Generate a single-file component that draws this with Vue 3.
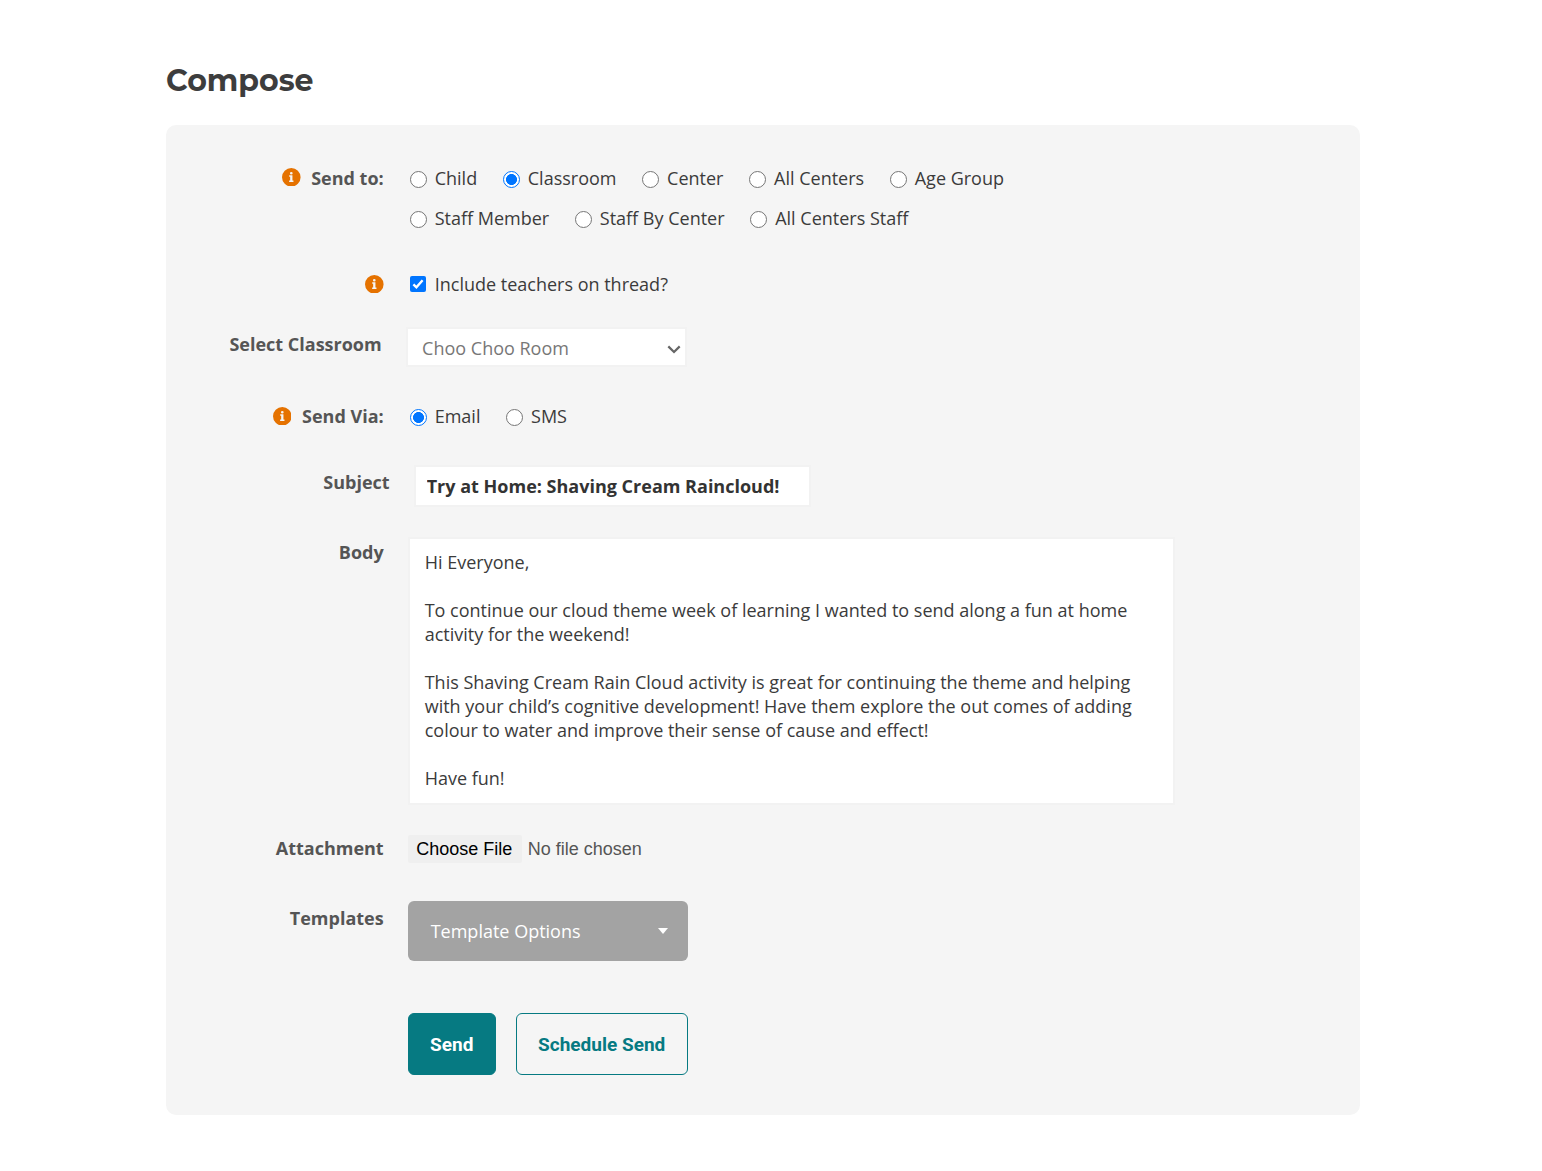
<script setup>
import { ref } from 'vue'

const recipientRows = [
  ['Child', 'Classroom', 'Center', 'All Centers', 'Age Group'],
  ['Staff Member', 'Staff By Center', 'All Centers Staff'],
]
const channels = ['Email', 'SMS']

const recipient = ref('Classroom')
const channel = ref('Email')
const includeTeachers = ref(true)
const subject = ref('Try at Home: Shaving Cream Raincloud!')
const body = [
  'Hi Everyone,',
  '',
  'To continue our cloud theme week of learning I wanted to send along a fun at home',
  'activity for the weekend!',
  '',
  'This Shaving Cream Rain Cloud activity is great for continuing the theme and helping',
  'with your child’s cognitive development! Have them explore the out comes of adding',
  'colour to water and improve their sense of cause and effect!',
  '',
  'Have fun!',
].join('\n')
const infoPath =
  'M9 0a9 9 0 1 0 0 18A9 9 0 0 0 9 0zM9 3.8a1.3 1.3 0 1 1 0 2.6A1.3 1.3 0 0 1 9 3.8zM7 7.1h3.1v5.1h1v1.3H6.9v-1.3h1V8.4H7z'
</script>

<template>
  <main class="page">
    <h1>Compose</h1>
    <form class="panel" @submit.prevent>
      <div class="row send-to">
        <div class="label">
          <svg class="info" viewBox="0 0 18 18"><path :d="infoPath" fill-rule="evenodd" /></svg>
          <span>Send to:</span>
        </div>
        <div class="field">
          <div v-for="(row, i) in recipientRows" :key="i" class="options">
            <label v-for="name in row" :key="name" class="option">
              <input v-model="recipient" type="radio" name="recipient" :value="name" />
              <span>{{ name }}</span>
            </label>
          </div>
        </div>
      </div>

      <div class="row include">
        <div class="label">
          <svg class="info" viewBox="0 0 18 18"><path :d="infoPath" fill-rule="evenodd" /></svg>
        </div>
        <label class="field option check">
          <input v-model="includeTeachers" type="checkbox" />
          <svg class="tick" viewBox="0 0 16 16"><path d="M3.4 8.4 6.4 11.3 12.6 4.3" /></svg>
          <span>Include teachers on thread?</span>
        </label>
      </div>

      <div class="row classroom">
        <div class="label"><span>Select Classroom</span></div>
        <div class="field select">
          <span>Choo Choo Room</span>
          <svg viewBox="0 0 14 9"><path d="M1.3 1.4 7 7 12.7 1.4" /></svg>
        </div>
      </div>

      <div class="row via">
        <div class="label">
          <svg class="info" viewBox="0 0 18 18"><path :d="infoPath" fill-rule="evenodd" /></svg>
          <span>Send Via:</span>
        </div>
        <div class="field options">
          <label v-for="name in channels" :key="name" class="option">
            <input v-model="channel" type="radio" name="channel" :value="name" />
            <span>{{ name }}</span>
          </label>
        </div>
      </div>

      <div class="row subject">
        <div class="label"><span>Subject</span></div>
        <input v-model="subject" class="field subject-input" type="text" />
      </div>

      <div class="row message">
        <div class="label"><span>Body</span></div>
        <div class="field body-text">{{ body }}</div>
      </div>

      <div class="row attachment">
        <div class="label"><span>Attachment</span></div>
        <div class="field file">
          <button type="button">Choose File</button>
          <span>No file chosen</span>
        </div>
      </div>

      <div class="row templates">
        <div class="label"><span>Templates</span></div>
        <button type="button" class="field dropdown">
          <span>Template Options</span>
          <svg viewBox="0 0 10 6"><path d="M0 0h10L5 6z" /></svg>
        </button>
      </div>

      <div class="actions">
        <button type="submit" class="send">Send</button>
        <button type="button" class="schedule">Schedule Send</button>
      </div>
    </form>
  </main>
</template>

<style>
body {
  margin: 0;
  background: #fff;
}
</style>

<style scoped>
* {
  box-sizing: border-box;
}
.page {
  width: 1194px;
  height: 1171px;
  margin-left: 166px;
  padding-top: 60px;
  font-family: 'Open Sans', sans-serif;
  font-size: 18px;
  line-height: 24px;
  color: #3b3b3b;
}
h1 {
  margin: 0;
  height: 65px;
  font: 700 30px/42px Montserrat, Inter, sans-serif;
  color: #3d3d3d;
}
button,
input {
  margin: 0;
  font: inherit;
}
.panel {
  height: 990px;
  padding-top: 34px;
  border-radius: 10px;
  background: #f5f5f5;
}
.row {
  display: flex;
  align-items: flex-start;
}
.label {
  display: flex;
  justify-content: flex-end;
  flex: none;
  width: 217.7px;
  margin-right: 24px;
  font-weight: 700;
  color: #555;
  white-space: nowrap;
}
.info {
  width: 18.6px;
  height: 18.6px;
  margin: 1.7px 10.6px 0 0;
  fill: #e57200;
}
.options {
  display: flex;
  gap: 25.6px;
  height: 40px;
  padding-left: 2px;
}
.option {
  display: flex;
  white-space: nowrap;
}
.option input {
  appearance: none;
  flex: none;
  width: 17px;
  height: 17px;
  margin: 5px 8px 0 0;
  border: 1px solid #767676;
  border-radius: 50%;
  background: #fff;
}
.option input[type='radio']:checked {
  border-color: #0075ff;
  background: radial-gradient(circle, #0075ff 5.2px, #fff 5.8px);
}
.send-to {
  height: 80px;
  margin-top: -2px;
  padding-top: 9px;
  margin-bottom: 35px;
}
.include {
  height: 24px;
}
.include .info {
  margin: 2.7px 0 0;
}
.option.check {
  position: relative;
  padding-left: 2px;
}
.option.check input {
  width: 16px;
  height: 16px;
  margin: 4px 9px 0 0;
  border: 0;
  border-radius: 2px;
  background: #0075ff;
}
.tick {
  position: absolute;
  left: 2px;
  top: 4px;
  width: 16px;
  height: 16px;
  fill: none;
  stroke: #fff;
  stroke-width: 2.4;
}
.classroom {
  height: 40px;
  margin-top: 31px;
}
.classroom .label {
  padding: 5px 2px 0 0;
}
.select {
  display: flex;
  align-items: center;
  justify-content: space-between;
  width: 281px;
  height: 40px;
  margin-left: -1.6px;
  padding: 2px 4px 0 14px;
  border: 2px solid #f2f2f2;
  background: #fff;
  color: #777;
}
.select svg {
  width: 14px;
  height: 9px;
  margin-top: 2px;
  fill: none;
  stroke: #666;
  stroke-width: 2.2;
}
.via {
  height: 24px;
  margin-top: 37px;
}
.via .info {
  margin-top: 2.7px;
}
.subject {
  height: 42px;
  margin-top: 37px;
}
.subject .label {
  width: 223.7px;
  padding-top: 5px;
}
.subject-input {
  width: 397px;
  height: 42px;
  padding: 0 11px 1px;
  border: 2px solid #f2f2f2;
  background: #fff;
  font-weight: 700;
  color: #333;
}
.message {
  height: 268px;
  margin-top: 30px;
}
.message .label {
  padding-top: 3px;
}
.body-text {
  width: 767px;
  height: 268px;
  padding: 11px 15px;
  border: 2px solid #f2f2f2;
  background: #fff;
  white-space: pre;
}
.attachment {
  height: 28px;
  margin-top: 30px;
}
.attachment .label {
  padding-top: 1px;
}
.file {
  display: flex;
  align-items: center;
  gap: 6px;
  font: 18px/28px 'Liberation Sans', sans-serif;
  color: #555;
}
.file button {
  width: 114px;
  height: 28px;
  padding: 0 1px 0 0;
  border: 0;
  border-radius: 2px;
  background: #efefef;
  color: #000;
}
.templates {
  height: 60px;
  margin-top: 38px;
}
.templates .label {
  padding-top: 5px;
}
.dropdown {
  display: flex;
  align-items: center;
  justify-content: space-between;
  width: 280px;
  height: 60px;
  padding: 0 20px 0 23px;
  border: 0;
  border-radius: 6px;
  background: #a3a3a3;
  color: #fff;
}
.dropdown svg {
  width: 10px;
  height: 6px;
  fill: #fff;
}
.actions {
  display: flex;
  gap: 20px;
  margin: 52px 0 0 241.7px;
}
.actions button {
  height: 62px;
  padding: 2px 0 0;
  border: 1px solid #067a82;
  border-radius: 6px;
  font: 700 19px/24px Roboto, sans-serif;
}
.actions .send {
  width: 88px;
  background: #067a82;
  color: #fff;
}
.actions .schedule {
  width: 172px;
  background: transparent;
  color: #067a82;
}
</style>
